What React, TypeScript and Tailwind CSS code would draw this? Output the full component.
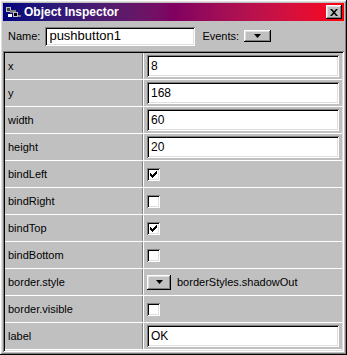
const rows: { name: string; kind: "text" | "check" | "select"; value?: string; checked?: boolean }[] = [
  { name: "x", kind: "text", value: "8" },
  { name: "y", kind: "text", value: "168" },
  { name: "width", kind: "text", value: "60" },
  { name: "height", kind: "text", value: "20" },
  { name: "bindLeft", kind: "check", checked: true },
  { name: "bindRight", kind: "check", checked: false },
  { name: "bindTop", kind: "check", checked: true },
  { name: "bindBottom", kind: "check", checked: false },
  { name: "border.style", kind: "select", value: "borderStyles.shadowOut" },
  { name: "border.visible", kind: "check", checked: false },
  { name: "label", kind: "text", value: "OK" },
];

const sunken =
  "shadow-[inset_1px_1px_#808080,inset_-1px_-1px_#ffffff,inset_2px_2px_#000000,inset_-2px_-2px_#dfdfdf]";
const raised =
  "shadow-[inset_-1px_-1px_#000000,inset_1px_1px_#ffffff,inset_-2px_-2px_#808080,inset_2px_2px_#dfdfdf]";

function DropButton({ w, h }: { w: string; h: string }) {
  return (
    <div className={`${w} ${h} bg-[#c0c0c0] ${raised} flex items-center justify-center`}>
      <svg width="7" height="4" viewBox="0 0 7 4">
        <path d="M0 0h7L3.5 4z" fill="#000" />
      </svg>
    </div>
  );
}

function Check({ checked }: { checked?: boolean }) {
  return (
    <div className={`w-[13px] h-[13px] bg-white ${sunken} flex items-center justify-center`}>
      {checked && (
        <svg width="7" height="7" viewBox="0 0 7 7">
          <path d="M0 2h1v1h1v1h1v-1h1v-1h1v-1h1v-1h1v3h-1v1h-1v1h-1v1h-1v1h-1v-1h-1v-1h-1z" fill="#000" />
        </svg>
      )}
    </div>
  );
}

export default function App() {
  return (
    <div
      className={`w-[347px] h-[355px] bg-[#c0c0c0] p-[3px] flex flex-col ${raised}`}
      style={{ fontFamily: '"Liberation Sans", Arial, sans-serif' }}
    >
      <div className="h-[18px] flex items-center bg-gradient-to-r from-[#000080] via-[#800060] to-[#ff0000] pl-[2px] pr-[2px]">
        <svg width="17" height="14" viewBox="0 0 17 14" className="shrink-0">
          <rect x="1" y="2" width="5" height="5" fill="#c0c0c0" />
          <rect x="2" y="3" width="3" height="3" fill="#404040" />
          <rect x="5" y="5" width="6" height="3" fill="#808080" />
          <rect x="8" y="7" width="5" height="5" fill="#c0c0c0" />
          <rect x="9" y="8" width="3" height="3" fill="#000" />
          <rect x="3" y="9" width="4" height="3" fill="#fff" />
          <rect x="13" y="10" width="3" height="2" fill="#808080" />
        </svg>
        <span className="ml-[2px] text-white font-bold text-[12px] leading-none">Object Inspector</span>
        <div className="ml-auto">
          <div className={`w-[16px] h-[14px] bg-[#c0c0c0] ${raised} flex items-center justify-center`}>
            <svg width="8" height="7" viewBox="0 0 8 7">
              <path d="M0 0h2l2 2.3L6 0h2L5 3.5 8 7H6L4 4.7 2 7H0l3-3.5z" fill="#000" />
            </svg>
          </div>
        </div>
      </div>

      <div className="h-[30px] flex items-center pl-[5px] text-[11px] text-black">
        <span>Name:</span>
        <div className={`ml-[5px] w-[150px] h-[19px] bg-white ${sunken} flex items-center pl-[4px] text-[13px]`}>
          pushbutton1
        </div>
        <span className="ml-[7px]">Events:</span>
        <div className="ml-[5px]">
          <DropButton w="w-[27px]" h="h-[12px]" />
        </div>
      </div>

      <div className={`flex-1 p-[2px] ${sunken} bg-[#c0c0c0]`}>
        {rows.map((r) => (
          <div key={r.name} className="h-[27px] flex border-b border-white text-[11px] text-black">
            <div className="w-[138px] flex items-center pl-[3px] border-r border-[#808080]">{r.name}</div>
            <div className="flex-1 flex items-center pl-[3px] pr-[3px] border-l border-white">
              {r.kind === "text" && (
                <div className={`w-full h-[22px] bg-white ${sunken} flex items-center pl-[4px] text-[12px]`}>
                  {r.value}
                </div>
              )}
              {r.kind === "check" && <Check checked={r.checked} />}
              {r.kind === "select" && (
                <div className="flex items-center">
                  <DropButton w="w-[24px]" h="h-[15px]" />
                  <span className="ml-[6px]">{r.value}</span>
                </div>
              )}
            </div>
          </div>
        ))}
      </div>
    </div>
  );
}
